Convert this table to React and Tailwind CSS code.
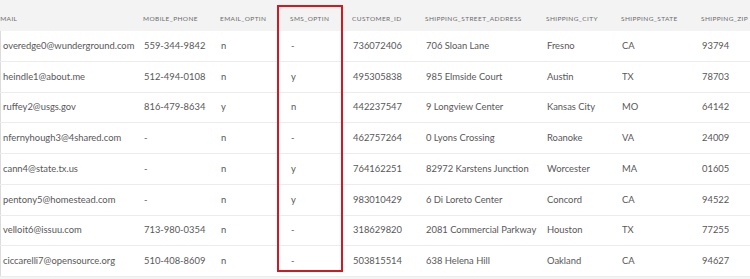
import React from "react";

const cols = [
  { key: "EMAIL", w: "w-[141px]", hp: "pl-0" },
  { key: "MOBILE_PHONE", w: "w-[77px]", hp: "pl-[6px]" },
  { key: "EMAIL_OPTIN", w: "w-[70px]", hp: "pl-[6px]" },
  { key: "SMS_OPTIN", w: "w-[62px]", hp: "pl-[6px]" },
  { key: "CUSTOMER_ID", w: "w-[73px]", hp: "pl-[6px]" },
  { key: "SHIPPING_STREET_ADDRESS", w: "w-[121px]", hp: "pl-[6px]" },
  { key: "SHIPPING_CITY", w: "w-[75px]", hp: "pl-[6px]" },
  { key: "SHIPPING_STATE", w: "w-[80px]", hp: "pl-[6px]" },
  { key: "SHIPPING_ZIP", w: "w-[80px]", hp: "pl-[6px]" },
];

const rows = [
  ["overedge0@wunderground.com", "559-344-9842", "n", "-", "736072406", "706 Sloan Lane", "Fresno", "CA", "93794"],
  ["heindle1@about.me", "512-494-0108", "n", "y", "495305838", "985 Elmside Court", "Austin", "TX", "78703"],
  ["ruffey2@usgs.gov", "816-479-8634", "y", "n", "442237547", "9 Longview Center", "Kansas City", "MO", "64142"],
  ["nfernyhough3@4shared.com", "-", "n", "-", "462757264", "0 Lyons Crossing", "Roanoke", "VA", "24009"],
  ["cann4@state.tx.us", "-", "n", "y", "764162251", "82972 Karstens Junction", "Worcester", "MA", "01605"],
  ["pentony5@homestead.com", "-", "n", "y", "983010429", "6 Di Loreto Center", "Concord", "CA", "94522"],
  ["velloit6@issuu.com", "713-980-0354", "n", "-", "318629820", "2081 Commercial Parkway", "Houston", "TX", "77255"],
  ["ciccarelli7@opensource.org", "510-408-8609", "n", "-", "503815514", "638 Helena Hill", "Oakland", "CA", "94627"],
];

export default function App() {
  return (
    <div
      className="relative w-[750px] h-[279px] overflow-hidden bg-[#f4f4f4]"
      style={{ fontFamily: "Lato, 'Open Sans', sans-serif" }}
    >
      <div className="ml-[-4px]">
        <div className="flex h-[31px] items-center pt-[6px] bg-[#f3f3f3]">
          {cols.map((c) => (
            <div
              key={c.key}
              className={`${c.w} ${c.hp} shrink-0 text-[6.5px] font-normal tracking-[0.4px] text-[#6c6c6c] whitespace-nowrap`}
            >
              {c.key}
            </div>
          ))}
        </div>
        <div className="bg-white border-l border-[#dcdcdc] ml-[4px]">
          {rows.map((r, i) => (
            <div
              key={i}
              className="flex h-[30.75px] items-center border-b border-[#ececec] ml-[-4px]"
            >
              {r.map((v, j) => (
                <div
                  key={j}
                  className={`${cols[j].w} shrink-0 pl-[6px] text-[9.4px] text-[#585858] whitespace-nowrap`}
                >
                  {v}
                </div>
              ))}
            </div>
          ))}
        </div>
      </div>
      <div className="absolute left-[277px] top-[5px] w-[66px] h-[267px] border-2 border-[#d21820]" />
    </div>
  );
}
